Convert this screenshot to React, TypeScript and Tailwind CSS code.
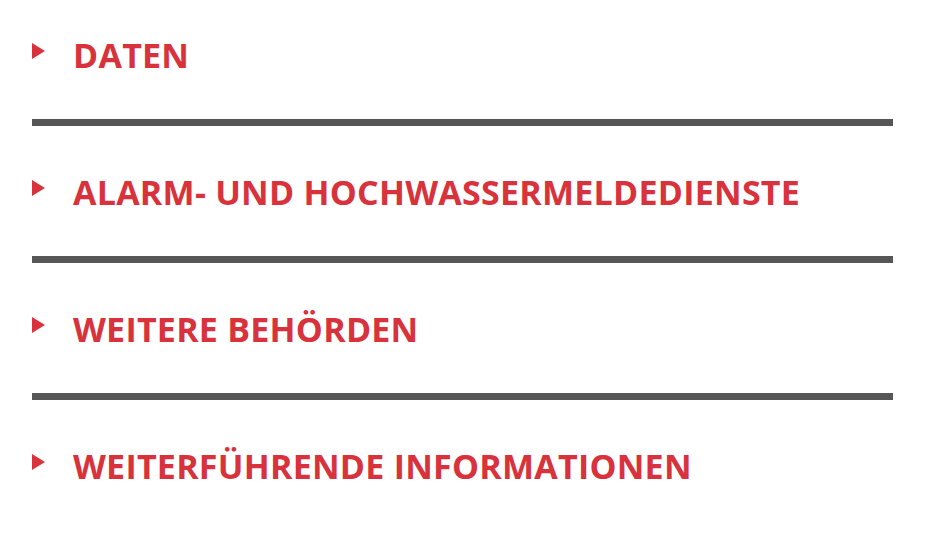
const items = [
  "Daten",
  "Alarm- und Hochwassermeldedienste",
  "Weitere Behörden",
  "Weiterführende Informationen",
];

function Caret() {
  return (
    <svg viewBox="0 0 13 16" className="w-[13px] h-[16px] shrink-0 -translate-y-[4px]">
      <path d="M0 0 L13 8 L0 16 Z" fill="#d8323c" />
    </svg>
  );
}

export default function App() {
  return (
    <main className="w-[936px] h-[546px] bg-white overflow-hidden" style={{ fontFamily: '"Open Sans", "Liberation Sans", sans-serif' }}>
      <ul className="ml-[32px] w-[861px]">
        {items.map((label, idx) => (
          <li
            key={label}
            className={
              (idx === 0 ? "pt-[33px] " : "pt-[44px] ") +
              (idx < items.length - 1 ? "pb-[42px] border-b-[7px] border-[#565656]" : "pb-[42px]")
            }
          >
            <a href="#" className="flex items-center h-[44px] gap-[28px] text-[#d8323c]">
              <Caret />
              <span className="text-[34px] font-bold uppercase leading-[44px] tracking-[0.25px]">{label}</span>
            </a>
          </li>
        ))}
      </ul>
    </main>
  );
}
